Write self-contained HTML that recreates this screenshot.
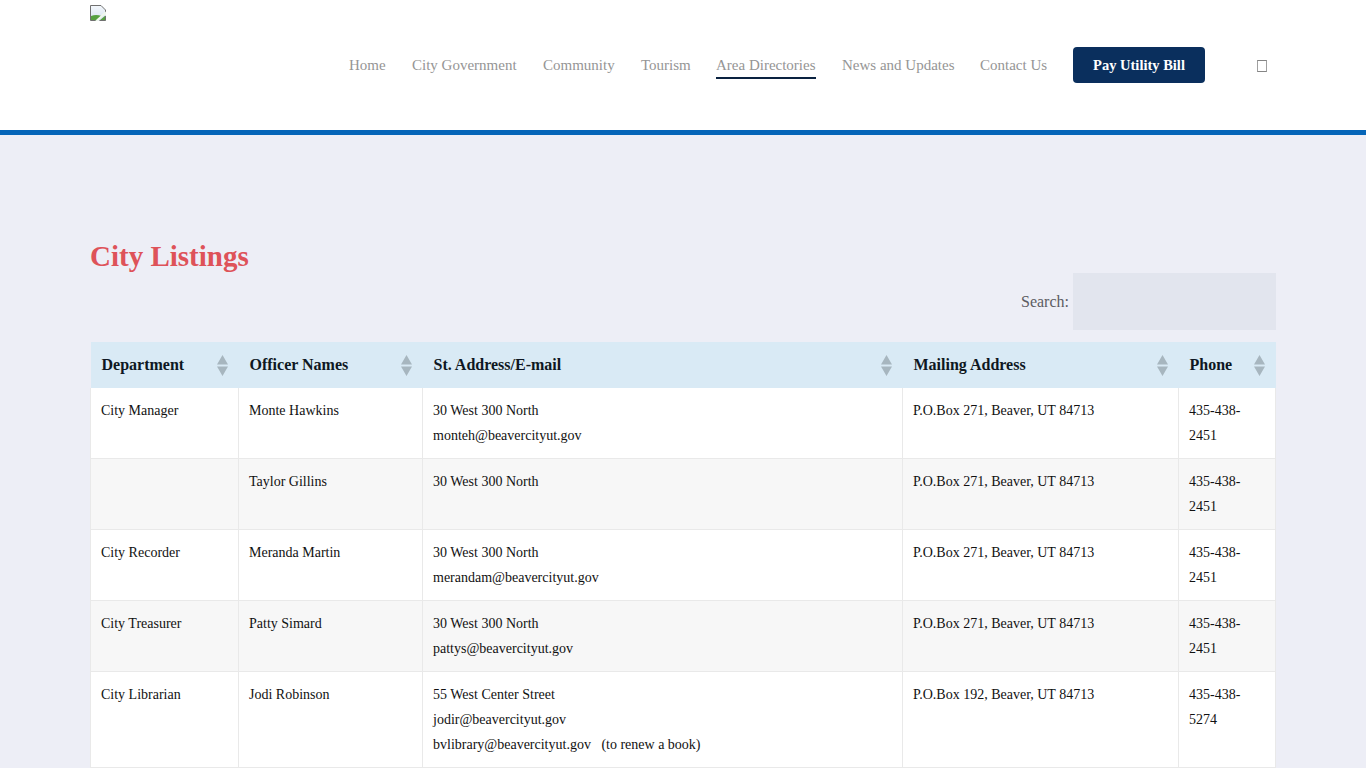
<!DOCTYPE html>
<html>
<head>
<meta charset="utf-8">
<style>
*{box-sizing:border-box;margin:0;padding:0}
html,body{width:1366px;height:768px;overflow:hidden}
body{background:#edeef6;font-family:"Liberation Serif",serif;color:#111;position:relative}
.header{position:absolute;left:0;top:0;width:1366px;height:130px;background:#fff}
.bar{position:absolute;left:0;top:130px;width:1366px;height:5px;background:#0565b8}
.logo{position:absolute;left:90px;top:5px;width:16px;height:16px}
.nav{position:absolute;top:0;left:0}
.nav a{position:absolute;top:57px;font-size:15px;line-height:17px;color:#959595;text-decoration:none;white-space:nowrap}
.nav a.active:after{content:"";position:absolute;left:0;right:0;top:20px;height:2px;background:#0a2240}
.btn{position:absolute;left:1073px;top:47px;width:132px;height:36px;background:#0a2f5d;border-radius:4px;color:#fff;font-weight:bold;font-size:14.5px;text-align:center;line-height:36px}
.tofu{position:absolute;left:1257px;top:60px;width:10px;height:12px;border:1.2px solid #a0a0a0;border-top:1.5px solid #858585;border-bottom:1.5px solid #858585}
h2{position:absolute;left:90px;top:238px;font-size:29px;line-height:36px;color:#de5259;font-weight:bold}
.slabel{position:absolute;left:1021px;top:293px;font-size:16px;line-height:17px;color:#5c5c62}
.sinput{position:absolute;left:1073px;top:273px;width:203px;height:57px;background:#e2e5ee}
table{position:absolute;left:90px;top:342px;border-collapse:collapse;table-layout:fixed;width:1185px}
th{background:#d9eaf5;font-weight:bold;font-size:16px;text-align:left;height:46px;padding:0 10px 0 11px;position:relative;color:#0e1722}
td{font-size:14px;line-height:25px;padding:10px 10px 10px 10px;vertical-align:top;border-left:1px solid #e9e9e9;border-bottom:1px solid #e9e9e9;background:#fff;color:#111}
tr.odd td{background:#fff}
tr.even td{background:#f7f7f7}
td:first-child{border-left:1px solid #e9e9e9;padding-left:10px}
td:last-child{border-right:1px solid #e9e9e9}
.sort{position:absolute;right:11px;top:12.5px;width:11px;height:21px}
</style>
</head>
<body>
<div class="header"></div>
<div class="bar"></div>
<svg class="logo" viewBox="0 0 16 16"><defs><linearGradient id="sky" x1="0" y1="0" x2="0" y2="1"><stop offset="0" stop-color="#f4f8fc"/><stop offset="1" stop-color="#d6e2f0"/></linearGradient></defs><path d="M0.5 0.5H11L15.5 5V15.5H0.5Z" fill="url(#sky)"/><path d="M1 15.5V11Q6 9 11.5 11L7 15.5Z" fill="#55a040"/><path d="M9.5 15.5L15.5 10.5V15.5Z" fill="#55a040"/><path d="M0.5 15.5V0.5H11L15.5 5V7.5" fill="none" stroke="#707070"/><path d="M15.5 11V15.5H9.5" fill="none" stroke="#707070"/><path d="M0.5 15.5H5.5" fill="none" stroke="#707070"/><path d="M6.3 16L16 7.2" stroke="#f0f8ec" stroke-width="1.8"/></svg>
<div class="nav">
<a style="left:349px">Home</a>
<a style="left:412px">City Government</a>
<a style="left:543px">Community</a>
<a style="left:641px">Tourism</a>
<a class="active" style="left:716px">Area Directories</a>
<a style="left:842px">News and Updates</a>
<a style="left:980px">Contact Us</a>
</div>
<div class="btn">Pay Utility Bill</div>
<div class="tofu"></div>
<h2>City Listings</h2>
<div class="slabel">Search:</div>
<div class="sinput"></div>
<table>
<colgroup><col style="width:148px"><col style="width:184px"><col style="width:480px"><col style="width:276px"><col style="width:97px"></colgroup>
<thead><tr>
<th>Department<svg class="sort" viewBox="0 0 11 21"><path d="M5.5 0L11 9.5H0Z M0 11.5H11L5.5 21Z" fill="#a7b6bf"/></svg></th>
<th>Officer Names<svg class="sort" viewBox="0 0 11 21"><path d="M5.5 0L11 9.5H0Z M0 11.5H11L5.5 21Z" fill="#a7b6bf"/></svg></th>
<th>St. Address/E-mail<svg class="sort" viewBox="0 0 11 21"><path d="M5.5 0L11 9.5H0Z M0 11.5H11L5.5 21Z" fill="#a7b6bf"/></svg></th>
<th>Mailing Address<svg class="sort" viewBox="0 0 11 21"><path d="M5.5 0L11 9.5H0Z M0 11.5H11L5.5 21Z" fill="#a7b6bf"/></svg></th>
<th>Phone<svg class="sort" viewBox="0 0 11 21"><path d="M5.5 0L11 9.5H0Z M0 11.5H11L5.5 21Z" fill="#a7b6bf"/></svg></th>
</tr></thead>
<tbody>
<tr class="odd"><td>City Manager</td><td>Monte Hawkins</td><td>30 West 300 North<br>monteh@beavercityut.gov</td><td>P.O.Box 271, Beaver, UT 84713</td><td>435-438-<br>2451</td></tr>
<tr class="even"><td></td><td>Taylor Gillins</td><td>30 West 300 North</td><td>P.O.Box 271, Beaver, UT 84713</td><td>435-438-<br>2451</td></tr>
<tr class="odd"><td>City Recorder</td><td>Meranda Martin</td><td>30 West 300 North<br>merandam@beavercityut.gov</td><td>P.O.Box 271, Beaver, UT 84713</td><td>435-438-<br>2451</td></tr>
<tr class="even"><td>City Treasurer</td><td>Patty Simard</td><td>30 West 300 North<br>pattys@beavercityut.gov</td><td>P.O.Box 271, Beaver, UT 84713</td><td>435-438-<br>2451</td></tr>
<tr class="odd"><td>City Librarian</td><td>Jodi Robinson</td><td>55 West Center Street<br>jodir@beavercityut.gov<br>bvlibrary@beavercityut.gov &nbsp;&nbsp;(to renew a book)</td><td>P.O.Box 192, Beaver, UT 84713</td><td>435-438-<br>5274</td></tr>
</tbody>
</table>
</body>
</html>
